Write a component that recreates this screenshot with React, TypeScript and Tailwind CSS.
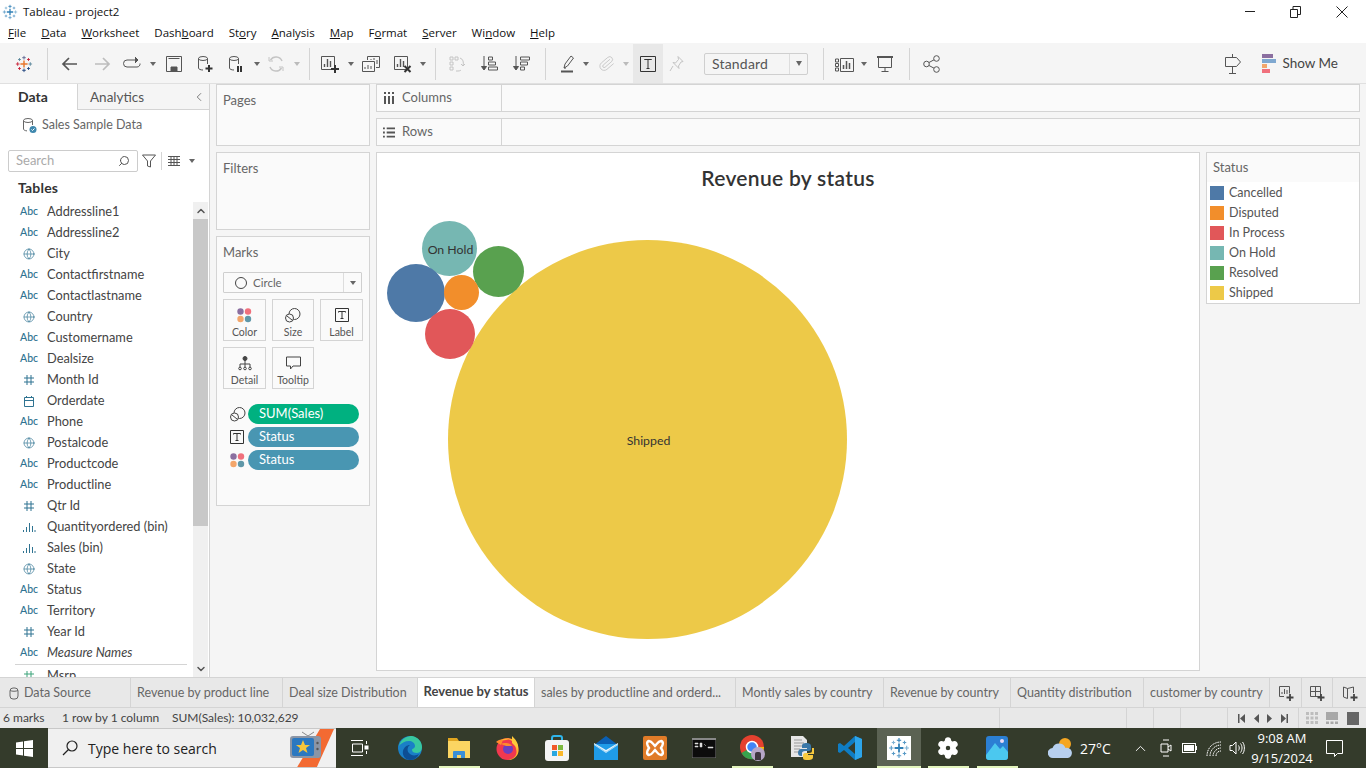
import type { ReactNode } from 'react'
import { Globe, Search, ChevronLeft, ChevronUp, ChevronDown, Settings, Paperclip } from 'lucide-react'

const fields: { icon: string; name: string; italic?: boolean }[] = [
  { icon: 'abc', name: 'Addressline1' },
  { icon: 'abc', name: 'Addressline2' },
  { icon: 'geo', name: 'City' },
  { icon: 'abc', name: 'Contactfirstname' },
  { icon: 'abc', name: 'Contactlastname' },
  { icon: 'geo', name: 'Country' },
  { icon: 'abc', name: 'Customername' },
  { icon: 'abc', name: 'Dealsize' },
  { icon: 'num', name: 'Month Id' },
  { icon: 'date', name: 'Orderdate' },
  { icon: 'abc', name: 'Phone' },
  { icon: 'geo', name: 'Postalcode' },
  { icon: 'abc', name: 'Productcode' },
  { icon: 'abc', name: 'Productline' },
  { icon: 'num', name: 'Qtr Id' },
  { icon: 'bin', name: 'Quantityordered (bin)' },
  { icon: 'bin', name: 'Sales (bin)' },
  { icon: 'geo', name: 'State' },
  { icon: 'abc', name: 'Status' },
  { icon: 'abc', name: 'Territory' },
  { icon: 'num', name: 'Year Id' },
  { icon: 'abc', name: 'Measure Names', italic: true },
]

const legend = [
  { name: 'Cancelled', color: '#4e79a7' },
  { name: 'Disputed', color: '#f28e2b' },
  { name: 'In Process', color: '#e15759' },
  { name: 'On Hold', color: '#76b7b2' },
  { name: 'Resolved', color: '#59a14f' },
  { name: 'Shipped', color: '#edc948' },
]

const menus: [string, string, string][] = [
  ['', 'F', 'ile'],
  ['', 'D', 'ata'],
  ['', 'W', 'orksheet'],
  ['Dash', 'b', 'oard'],
  ['St', 'o', 'ry'],
  ['', 'A', 'nalysis'],
  ['', 'M', 'ap'],
  ['F', 'o', 'rmat'],
  ['', 'S', 'erver'],
  ['Wi', 'n', 'dow'],
  ['', 'H', 'elp'],
]

function Cross({ x, y, s, c, w = 1 }: { x: number; y: number; s: number; c: string; w?: number }) {
  return <path d={`M${x - s} ${y}H${x + s}M${x} ${y - s}V${y + s}`} stroke={c} strokeWidth={w} fill="none" />
}

function TableauLogo({ size, colored }: { size: number; colored?: boolean }) {
  const a = colored ? '#e8762c' : '#2f7fb5'
  const b = colored ? '#5b6591' : '#2f7fb5'
  const c = colored ? '#c72037' : '#5a9bc7'
  const d = colored ? '#1f447e' : '#5a9bc7'
  const e = colored ? '#59879b' : '#7fb2d3'
  return (
    <svg width={size} height={size} viewBox="0 0 20 20">
      <Cross x={10} y={10} s={4} c={a} w={1.6} />
      <Cross x={10} y={3} s={2} c={b} />
      <Cross x={10} y={17} s={2} c={d} />
      <Cross x={3} y={10} s={2} c={c} />
      <Cross x={17} y={10} s={2} c={e} />
      <Cross x={5} y={5} s={1.6} c={e} />
      <Cross x={15} y={5} s={1.6} c={c} />
      <Cross x={5} y={15} s={1.6} c={c} />
      <Cross x={15} y={15} s={1.6} c={d} />
    </svg>
  )
}

function Ico({ children, w = 18, h = 18 }: { children: ReactNode; w?: number; h?: number }) {
  return (
    <svg width={w} height={h} viewBox={`0 0 ${w} ${h}`} fill="none" stroke="#555" strokeWidth="1">
      {children}
    </svg>
  )
}

function Caret({ light }: { light?: boolean }) {
  return <span className={`block w-0 h-0 border-x-[3px] border-x-transparent border-t-[4px] ${light ? 'border-t-[#bbbbbb]' : 'border-t-[#666666]'}`} />
}

function Sep({ className }: { className: string }) {
  return <div className={`w-px h-[32px] bg-[#d4d4d4] shrink-0 ${className}`} />
}

function Slot({ className, children }: { className: string; children: ReactNode }) {
  return <div className={`h-full flex items-center justify-center shrink-0 ${className}`}>{children}</div>
}

function DbIcon({ badge, stroke = '#555' }: { badge?: ReactNode; stroke?: string }) {
  return (
    <svg width="16" height="18" viewBox="0 0 16 18" fill="none" stroke={stroke} strokeWidth="1">
      <ellipse cx="6" cy="3.5" rx="4.5" ry="2" />
      <path d="M1.5 3.5V13c0 1.2 2 2 4.5 2M10.5 3.5V9" />
      {badge}
    </svg>
  )
}

function BarsBox({ badge }: { badge: ReactNode }) {
  return (
    <Ico w={20}>
      <path d="M1.5 1.5h13v11M14.5 14.5h-13v-13" />
      <path d="M4.5 12V9M7.5 12V4M10.5 12V6" strokeWidth="1.4" />
      {badge}
    </Ico>
  )
}

function Toolbar() {
  return (
    <div className="h-[41px] bg-[#f5f5f5] border-b border-[#e0e0e0] pt-px flex items-center shrink-0">
      <Slot className="w-[20px] ml-[14px]"><TableauLogo size={18} colored /></Slot>
      <Sep className="ml-[13px]" />
      <Slot className="w-[20px] ml-[12px]">
        <Ico><path d="M16 9H2M8 3 2 9l6 6" stroke="#555" strokeWidth="1.7" /></Ico>
      </Slot>
      <Slot className="w-[20px] ml-[12px]">
        <Ico><path d="M2 9h14M10 3l6 6-6 6" stroke="#bdbdbd" strokeWidth="1.7" /></Ico>
      </Slot>
      <Slot className="w-[20px] ml-[10px]">
        <Ico w={20}><path d="M13 5H5a3.5 3.5 0 0 0 0 7h10a3 3 0 0 0 3-3.5" /><path d="m13 2 3 3-3 3" fill="#555" /></Ico>
      </Slot>
      <Slot className="w-[7px] ml-[7px]"><Caret /></Slot>
      <Slot className="w-[20px] ml-[8px]">
        <Ico><path d="M1.5 1.5h15v15h-15zM3.5 3.5h11" /><path d="M6 16v-4h6v4" fill="#555" /></Ico>
      </Slot>
      <Slot className="w-[20px] ml-[11px]">
        <DbIcon badge={<path d="M12 10v7M8.5 13.5h7" stroke="#333" strokeWidth="2" />} />
      </Slot>
      <Slot className="w-[20px] ml-[11px]">
        <DbIcon badge={<path d="M10 11v6M13 11v6" stroke="#333" strokeWidth="2" />} />
      </Slot>
      <Slot className="w-[7px] ml-[7px]"><Caret /></Slot>
      <Slot className="w-[20px] ml-[6px]">
        <Ico><path d="M15 6a6.5 6.5 0 0 0-11.5-1M3 12a6.5 6.5 0 0 0 11.5 1" stroke="#c4c4c4" strokeWidth="1.5" /><path d="M2 2v4h4M16 16v-4h-4" stroke="#c4c4c4" /></Ico>
      </Slot>
      <Slot className="w-[7px] ml-[7px]"><Caret light /></Slot>
      <Sep className="ml-[9px]" />
      <Slot className="w-[20px] ml-[10px]">
        <BarsBox badge={<path d="M15 10v8M11 14h8" stroke="#333" strokeWidth="2" />} />
      </Slot>
      <Slot className="w-[7px] ml-[7px]"><Caret /></Slot>
      <Slot className="w-[20px] ml-[7px]">
        <Ico>
          <path d="M5.5 5V1.5h12v11H14" />
          <path d="M.5 6.5h12v10H.5z" fill="#f5f5f5" />
          <path d="M3 14v-2M6 14v-4M9 14v-3M9 5V4M12 5V3M15 9V5" />
        </Ico>
      </Slot>
      <Slot className="w-[20px] ml-[12px]">
        <BarsBox badge={<path d="m11.5 11 6 6M17.5 11l-6 6" stroke="#333" strokeWidth="2" />} />
      </Slot>
      <Slot className="w-[7px] ml-[6px]"><Caret /></Slot>
      <Sep className="ml-[9px]" />
      <Slot className="w-[20px] ml-[11px]">
        <Ico>
          <g stroke="#c4c4c4">
            <path d="M2 2h3v3H2zM7 2h3v3H7zM2 7h3v3H2zM2 12h3v3H2z" />
            <path d="M12 3c3 1 4 4 3 8M15 11l-2-2M15 11l2-2M8 16c3 0 4 0 5-1" />
          </g>
        </Ico>
      </Slot>
      <Slot className="w-[20px] ml-[12px]">
        <Ico>
          <path d="M4 1v13M1.5 11.5 4 15l2.5-3.500z" fill="#555" />
          <path d="M8.500 2h4v3h-4zM8.500 7h7v3h-7zM8.500 12h9v3h-9z" />
        </Ico>
      </Slot>
      <Slot className="w-[20px] ml-[12px]">
        <Ico>
          <path d="M4 1v13M1.500 11.500 4 15l2.500-3.500z" fill="#555" />
          <path d="M8.500 2h9v3h-9zM8.500 7h7v3h-7zM8.500 12h4v3h-4z" />
        </Ico>
      </Slot>
      <Sep className="ml-[14px]" />
      <Slot className="w-[20px] ml-[11px]">
        <Ico>
          <path d="m6 13 1-4 6-8 2.500 2-6 8z" fill="none" />
          <path d="M3 16.500h12" stroke="#555" strokeWidth="2" />
          <path d="M6 13h2" />
        </Ico>
      </Slot>
      <Slot className="w-[7px] ml-[5px]"><Caret /></Slot>
      <Slot className="w-[20px] ml-[7px]">
        <Paperclip size={17} strokeWidth={1.200} color="#c4c4c4" className="rotate-[5deg]" />
      </Slot>
      <Slot className="w-[7px] ml-[6px]"><Caret light /></Slot>
      <Slot className="w-[30px] ml-[4px] bg-[#e8e8e8]">
        <Ico><path d="M1.500 1.500h15v15h-15z" stroke="#333" /><path d="M5.500 5v-.5h7V5M9 4.500v9M7.500 13.500h3" stroke="#333" /></Ico>
      </Slot>
      <Slot className="w-[20px] ml-[4px]">
        <Ico><path d="M10 1.500l5 5-2 .5-2.500 4 .5 2.500-6-6 2.500.5 3-3.500zM5 11l-3 5" stroke="#c4c4c4" /></Ico>
      </Slot>
      <div className="ml-[17px] w-[104px] h-[22px] border border-[#cfcfcf] rounded-[2px] flex items-center shrink-0">
        <span className="flex-1 pl-[7px] pb-px text-[14px] text-[#555] tracking-[0.2px]">Standard</span>
        <span className="w-[18px] h-full border-l border-[#dddddd] flex items-center justify-center"><span className="w-0 h-0 border-x-[3.500px] border-x-transparent border-t-[5px] border-t-[#666666]" /></span>
      </div>
      <Sep className="ml-[15px]" />
      <Slot className="w-[20px] ml-[11px]">
        <Ico w={20}>
          <path d="M.5 4h3v3h-3zM.5 8.500h3v3h-3zM.5 13h3v3h-3z" />
          <path d="M5.500 3.500h13v13h-13z" />
          <path d="M8.500 14v-4M11.500 14V6M14.500 14V8" strokeWidth="1.500" />
        </Ico>
      </Slot>
      <Slot className="w-[7px] ml-[5px]"><Caret /></Slot>
      <Slot className="w-[20px] ml-[8px]">
        <Ico><path d="M1 2h16" strokeWidth="2" /><path d="M2.500 3v9.500h13V3M9 12.500v4M5.500 16.500h7" /></Ico>
      </Slot>
      <Sep className="ml-[14px]" />
      <Slot className="w-[20px] ml-[12px]">
        <Ico>
          <circle cx="3.500" cy="9" r="2.800" />
          <circle cx="13.500" cy="3.500" r="2.800" />
          <circle cx="13.500" cy="14.500" r="2.800" />
          <path d="m6 7.500 5-2.700M6 10.500l5 2.700" />
        </Ico>
      </Slot>
      <Slot className="w-[20px] ml-auto">
        <Ico w={20} h={22}>
          <path d="M9.500 1v3M9.500 14v6M6 20.500h7M2.500 4.500h11l4 4.500-4 4.500h-11z" />
        </Ico>
      </Slot>
      <div className="ml-[19px] w-[14px] flex flex-col gap-0 shrink-0">
        <span className="h-[4px] w-[11px] bg-[#8b6fa0]" />
        <span className="h-[4px] w-[14px] bg-[#7fa8d0] mt-px" />
        <span className="h-[4px] w-[5px] bg-[#f3a66b] mt-px" />
        <span className="h-[4px] w-[8px] bg-[#f0707c] mt-px" />
      </div>
      <span className="ml-[6px] mr-[28px] text-[13.500px] text-[#444] whitespace-nowrap">Show Me</span>
    </div>
  )
}

function FieldIcon({ kind }: { kind: string }) {
  if (kind === 'abc') return <span className="text-[10.500px] font-medium text-[#2f7391] tracking-[-0.1px]">Abc</span>
  if (kind === 'geo') return <Globe size={12} strokeWidth={1.300} color="#2f7391" />
  if (kind === 'num') {
    return (
      <svg width="12" height="12" viewBox="0 0 12 12" fill="none" stroke="#2f7391">
        <path d="M4 1v10M8 1v10M1 4h10M1 8h10" />
      </svg>
    )
  }
  if (kind === 'date') {
    return (
      <svg width="12" height="12" viewBox="0 0 12 12" fill="none" stroke="#2f7391">
        <path d="M1.500 2.500h9v9h-9zM1.500 5.500h9M3.500 1v2M8.500 1v2" />
      </svg>
    )
  }
  return (
    <svg width="14" height="12" viewBox="0 0 14 12" fill="none" stroke="#2f7391">
      <path d="M1.500 11V9M4.500 11V6M7.500 11V2M10.500 11V5M13 11V9" />
    </svg>
  )
}

function DataPane() {
  return (
    <div className="w-[210px] shrink-0 bg-white border-r border-[#d4d4d4] flex flex-col">
      <div className="h-[26px] flex shrink-0">
        <div className="w-[77px] pl-[18px] pb-px flex items-center text-[14px] font-bold text-[#333]">Data</div>
        <div className="flex-1 pl-[12px] pt-px flex items-center justify-between bg-[#f5f5f5] border-l border-b border-[#d4d4d4] text-[13.500px] text-[#555]">
          Analytics
          <ChevronLeft size={14} strokeWidth={1.300} className="mr-[3px]" color="#555" />
        </div>
      </div>
      <div className="h-[31px] flex items-center pl-[22px] shrink-0 text-[12.500px] text-[#666]">
        <svg width="16" height="17" viewBox="0 0 16 17" fill="none" stroke="#666">
          <ellipse cx="6" cy="3.500" rx="4.500" ry="2" />
          <path d="M1.500 3.500V12c0 1 1.500 1.700 3.500 1.900M10.500 3.500V8" />
          <circle cx="11" cy="12.500" r="3.500" fill="#3f88ae" stroke="none" />
          <path d="m9.500 12.500 1 1 2-2" stroke="#fff" />
        </svg>
        <span className="ml-[4px]">Sales Sample Data</span>
      </div>
      <div className="h-[35px] flex items-center shrink-0 pl-[8px] pt-[5px]">
        <div className="w-[130px] h-[22px] border border-[#cccccc] rounded-[2px] flex items-center justify-between px-[7px] text-[13px] text-[#aaaaaa]">
          Search
          <Search size={12} color="#555" className="-scale-x-100" />
        </div>
        <svg width="14" height="14" viewBox="0 0 14 14" fill="none" stroke="#555" className="ml-[4px]">
          <path d="M.5 1h13L8.500 7v6l-3-1V7z" />
        </svg>
        <span className="ml-[5px] w-px h-[18px] bg-[#d4d4d4]" />
        <svg width="12" height="10" viewBox="0 0 12 10" fill="none" stroke="#555" className="ml-[6px]">
          <path d="M0 .5h12M0 3.500h12M0 6.500h12M0 9.500h12M3 0v10M6 0v10M9 0v10" />
        </svg>
        <span className="ml-[9px] flex items-center"><Caret /></span>
      </div>
      <div className="h-[24px] pl-[18px] pb-[2px] flex items-center shrink-0 text-[14px] font-bold text-[#333] tracking-[0.2px]">Tables</div>
      <div className="flex-1 flex min-h-0">
        <div className="flex-1 overflow-hidden pt-px">
          {fields.map((f) => (
            <div key={f.name} className="h-[21px] flex items-center">
              <span className="w-[47px] pl-[19px] pr-[8px] flex justify-center shrink-0"><FieldIcon kind={f.icon} /></span>
              <span className={`text-[12.800px] text-[#444] whitespace-nowrap ${f.italic ? 'italic' : ''}`}>{f.name}</span>
            </div>
          ))}
          <div className="h-px bg-[#d4d4d4] ml-[15px] mr-[6px] mt-[1px]" />
          <div className="h-[21px] flex items-center">
            <span className="w-[47px] pl-[19px] pr-[8px] flex justify-center shrink-0">
              <svg width="12" height="12" viewBox="0 0 12 12" fill="none" stroke="#3da37a"><path d="M4 1v10M8 1v10M1 4h10M1 8h10" /></svg>
            </span>
            <span className="text-[12.800px] text-[#444]">Msrp</span>
          </div>
        </div>
        <div className="w-[15px] mr-px shrink-0 bg-[#f0f0f0] flex flex-col mt-[2px]">
          <div className="h-[17px] flex items-center justify-center"><ChevronUp size={12} strokeWidth={3} color="#555" /></div>
          <div className="h-[307px] bg-[#c8c8c8]" />
          <div className="flex-1" />
          <div className="h-[17px] flex items-center justify-center"><ChevronDown size={12} strokeWidth={3} color="#555" /></div>
        </div>
      </div>
    </div>
  )
}

function MarkBtn({ label, children }: { label: string; children: ReactNode }) {
  return (
    <div className="h-[42px] border border-[#d4d4d4] bg-[#fafafa] flex flex-col items-center pt-[6px]">
      <span className="h-[18px] flex items-center">{children}</span>
      <span className="text-[10.500px] text-[#555] mt-[3px] leading-none">{label}</span>
    </div>
  )
}

function ColorDots() {
  return (
    <svg width="15" height="15" viewBox="0 0 15 15">
      <circle cx="3.500" cy="3.500" r="3.200" fill="#8b6fa0" />
      <circle cx="11" cy="3.500" r="3.200" fill="#f0707c" />
      <circle cx="3.500" cy="11" r="3.200" fill="#f3a66b" />
      <circle cx="11" cy="11" r="3.200" fill="#5f97a8" />
    </svg>
  )
}

function SizeIcon() {
  return (
    <svg width="16" height="15" viewBox="0 0 16 15" fill="none" stroke="#444">
      <circle cx="9.500" cy="6" r="5.500" />
      <circle cx="4.500" cy="10" r="4" fill="#fafafa" />
      <path d="m2 8 5 4" />
    </svg>
  )
}

function LabelIcon() {
  return (
    <svg width="14" height="14" viewBox="0 0 14 14" fill="none" stroke="#333">
      <path d="M.5.5h13v13H.5z" />
      <path d="M3.500 4.500v-1h7v1M7 3.500v7M5.500 10.500h3" />
    </svg>
  )
}

function Pill({ bg, label, children }: { bg: string; label: string; children: ReactNode }) {
  return (
    <div className="flex items-center h-[20px]">
      <span className="w-[31px] pl-[13px] flex items-center">{children}</span>
      <div className={`w-[111px] h-[20px] rounded-full pl-[11px] flex items-center text-[13px] text-white ${bg}`}>{label}</div>
    </div>
  )
}

function CardsColumn() {
  return (
    <div className="w-[154px] ml-[6px] shrink-0 flex flex-col gap-[6px]">
      <div className="h-[62px] bg-[#fafafa] border border-[#d4d4d4] px-[6px] pt-[6px] text-[13px] text-[#666]">Pages</div>
      <div className="h-[78px] bg-[#fafafa] border border-[#d4d4d4] px-[6px] pt-[6px] text-[13px] text-[#666]">Filters</div>
      <div className="h-[270px] bg-[#fafafa] border border-[#d4d4d4] px-[6px] pt-[6px] text-[#666]">
        <div className="text-[13px] h-[18px] leading-[18px]">Marks</div>
        <div className="mt-[11px] h-[21px] w-[139px] border border-[#cfcfcf] rounded-[1px] flex items-center">
          <span className="w-[23px] flex justify-end">
            <span className="w-[12px] h-[12px] rounded-full border border-[#444]" />
          </span>
          <span className="ml-[6px] flex-1 text-[11.500px] text-[#666]">Circle</span>
          <span className="w-[18px] h-full border-l border-[#dddddd] flex items-center justify-center"><span className="w-0 h-0 border-x-[3.500px] border-x-transparent border-t-[4px] border-t-[#666666]" /></span>
        </div>
        <div className="mt-[6px] grid grid-cols-[43px_42px_43px] gap-x-[6px] gap-y-[6px] w-[140px]">
          <MarkBtn label="Color"><ColorDots /></MarkBtn>
          <MarkBtn label="Size"><SizeIcon /></MarkBtn>
          <MarkBtn label="Label"><LabelIcon /></MarkBtn>
          <MarkBtn label="Detail">
            <svg width="14" height="15" viewBox="0 0 14 15" fill="none" stroke="#444">
              <circle cx="7" cy="2.500" r="2" fill="#444" />
              <path d="M7 4v4M2 11V8h10v3M7 8v3" />
              <circle cx="2" cy="12.500" r="1.300" />
              <circle cx="7" cy="12.500" r="1.300" />
              <circle cx="12" cy="12.500" r="1.300" />
            </svg>
          </MarkBtn>
          <MarkBtn label="Tooltip">
            <svg width="15" height="14" viewBox="0 0 15 14" fill="none" stroke="#444">
              <path d="M.5 1h14v9H7l-2.500 3v-3h-4z" />
            </svg>
          </MarkBtn>
        </div>
        <div className="mt-[15px] flex flex-col gap-[3px] -ml-[6px]">
          <Pill bg="bg-[#00b180]" label="SUM(Sales)"><SizeIcon /></Pill>
          <Pill bg="bg-[#4996b2]" label="Status"><LabelIcon /></Pill>
          <Pill bg="bg-[#4996b2]" label="Status"><ColorDots /></Pill>
        </div>
      </div>
    </div>
  )
}

function Shelf({ label, children }: { label: string; children: ReactNode }) {
  return (
    <div className="h-[28px] bg-[#fafafa] border border-[#d4d4d4] flex items-center text-[13px] text-[#666]">
      <div className="w-[125px] h-full border-r border-[#d4d4d4] flex items-center pl-[6px] gap-[7px]">
        {children}
        {label}
      </div>
    </div>
  )
}

function Circle({ cls, label }: { cls: string; label?: string }) {
  return (
    <div className={`absolute rounded-full flex items-center justify-center pt-[3px] pl-[2px] text-[12.300px] text-[#333] ${cls}`}>
      {label}
    </div>
  )
}

function Viz() {
  return (
    <div className="flex-1 flex flex-col ml-[6px] mr-[6px] gap-[6px] min-w-0">
      <Shelf label="Columns">
        <svg width="12" height="12" viewBox="0 0 12 12" fill="#555"><path d="M1 4h2v8H1zM5 4h2v8H5zM9 4h2v8H9zM1 0h2v2H1zM5 0h2v2H5zM9 0h2v2H9z" /></svg>
      </Shelf>
      <Shelf label="Rows">
        <svg width="12" height="11" viewBox="0 0 13 11" fill="#555"><path d="M0 0h2v2H0zM0 4.500h2v2H0zM0 9h2v2H0zM4 0h9v2H4zM4 4.500h9v2H4zM4 9h9v2H4z" /></svg>
      </Shelf>
      <div className="flex-1 flex gap-[6px] min-h-0 mb-[6px]">
        <div className="w-[824px] bg-white border border-[#d4d4d4] relative overflow-hidden">
          <div className="text-center text-[21px] font-semibold text-[#333] tracking-[0.3px] pt-[12px] leading-[26px]">Revenue by status</div>
          <Circle cls="left-[71px] top-[87px] w-[399px] h-[399px] bg-[#edc948]" label="Shipped" />
          <Circle cls="left-[45px] top-[68px] w-[55px] h-[55px] bg-[#76b7b2]" label="On Hold" />
          <Circle cls="left-[96px] top-[93px] w-[51px] h-[51px] bg-[#59a14f]" />
          <Circle cls="left-[10px] top-[111px] w-[58px] h-[58px] bg-[#4e79a7]" />
          <Circle cls="left-[67px] top-[122px] w-[35px] h-[35px] bg-[#f28e2b]" />
          <Circle cls="left-[48px] top-[156px] w-[50px] h-[50px] bg-[#e15759]" />
        </div>
        <div className="flex-1 h-[152px] bg-white border border-[#d4d4d4]">
          <div className="h-[29px] bg-[#fafafa] pl-[6px] flex items-center text-[13px] text-[#666]">Status</div>
          <div className="pt-[1px]">
            {legend.map((l) => (
              <div key={l.name} className="h-[20px] flex items-center pl-[3px]">
                <span className="w-[14px] h-[14px]" style={{ backgroundColor: l.color }} />
                <span className="ml-[5px] text-[12.500px] text-[#555]">{l.name}</span>
              </div>
            ))}
          </div>
        </div>
      </div>
    </div>
  )
}

function Tab({ w, active, children }: { w: string; active?: boolean; children: ReactNode }) {
  return (
    <div className={`h-full shrink-0 border-r border-[#d4d4d4] flex items-center overflow-hidden whitespace-nowrap ${w} ${active ? 'bg-white font-bold text-[13px] text-[#444] pb-[2px] justify-center' : 'text-[12.500px] text-[#666] pl-[6px] pt-px'}`}>
      {children}
    </div>
  )
}

function BarsBoxSmall() {
  return (
    <Ico w={16} h={16}>
      <path d="M1.500 1.500h10v7M6 11.500H1.500v-10" />
      <path d="M4 9V7M6.500 9V4M9 9V5" />
      <path d="M12 9v7M8.500 12.500h7" stroke="#444" strokeWidth="1.800" />
    </Ico>
  )
}

function TabBar() {
  return (
    <div className="h-[31px] shrink-0 bg-[#e8e8e8] border-y border-[#d4d4d4] flex">
      <Tab w="w-[131px]">
        <svg width="10" height="13" viewBox="0 0 10 13" fill="none" stroke="#666" className="ml-[3px] mr-[5px]">
          <rect x="1" y="1" width="8" height="11" rx="3" />
          <path d="M1 3.500c2 1 6 1 8 0" />
        </svg>
        Data Source
      </Tab>
      <Tab w="w-[152px]">Revenue by product line</Tab>
      <Tab w="w-[135px]">Deal size Distribution</Tab>
      <Tab w="w-[117px]" active>Revenue by status</Tab>
      <Tab w="w-[201px]">sales by productline and orderd...</Tab>
      <Tab w="w-[148px]">Montly sales by country</Tab>
      <Tab w="w-[127px]">Revenue by country</Tab>
      <Tab w="w-[133px]">Quantity distribution</Tab>
      <Tab w="w-[126px]">customer by country</Tab>
      <div className="w-[32px] h-full border-r border-[#d4d4d4] flex items-center justify-center shrink-0">
        <BarsBoxSmall />
      </div>
      <div className="w-[31px] h-full border-r border-[#d4d4d4] flex items-center justify-center shrink-0">
        <Ico w={16} h={16}>
          <path d="M1.500 1.500h10v10h-10zM6.500 1.500v10M1.500 6.500h10" />
          <path d="M12 9v7M8.500 12.500h7" stroke="#444" strokeWidth="1.800" />
        </Ico>
      </div>
      <div className="flex-1 flex items-center justify-center">
        <Ico w={16} h={16}>
          <path d="M1.500 2v10l4 1.500V3.500zM5.500 3.500l6-1.500v6" />
          <path d="M12 9v7M8.500 12.500h7" stroke="#444" strokeWidth="1.800" />
        </Ico>
      </div>
    </div>
  )
}

function StatusBar() {
  return (
    <div className="h-[20px] shrink-0 bg-[#e8e8e8] flex items-center text-[12px] text-[#444]">
      <span className="w-[59px] pl-[3px] shrink-0">6 marks</span>
      <span className="ml-[3px] w-[110px] shrink-0">1 row by 1 column</span>
      <span className="whitespace-nowrap">SUM(Sales): 10,032,629</span>
      <div className="ml-auto flex h-full items-center">
        <span className="h-full w-[127px] border-l border-[#d4d4d4]" />
        <span className="h-full w-[27px] border-l border-[#d4d4d4]" />
        <span className="h-full w-[27px] border-l border-[#d4d4d4]" />
        <span className="h-full w-[47px] border-l border-[#d4d4d4]" />
        <div className="h-full w-[71px] border-l border-[#d4d4d4] flex items-center justify-around px-[6px]">
          <svg width="7" height="9" viewBox="0 0 7 9" fill="#555"><path d="M0 0h1.500v9H0zM7 0v9L2 4.500z" /></svg>
          <svg width="5" height="9" viewBox="0 0 5 9" fill="#555"><path d="M5 0v9L0 4.500z" /></svg>
          <svg width="5" height="9" viewBox="0 0 5 9" fill="#555"><path d="M0 0v9l5-4.500z" /></svg>
          <svg width="7" height="9" viewBox="0 0 7 9" fill="#555"><path d="M5.500 0H7v9H5.500zM0 0v9l5-4.500z" /></svg>
        </div>
        <div className="h-full w-[68px] border-l border-[#d4d4d4] flex items-center justify-around px-[3px]">
          <svg width="12" height="12" viewBox="0 0 12 12" fill="#bdbdbd"><path d="M0 0h3v3H0zM4.500 0h3v3h-3zM9 0h3v3H9zM0 4.500h3v3H0zM4.500 4.500h3v3h-3zM9 4.500h3v3H9zM0 9h3v3H0zM4.500 9h3v3h-3zM9 9h3v3H9z" /></svg>
          <svg width="12" height="12" viewBox="0 0 12 12" fill="#a8a8a8"><path d="M0 0h12v8H0zM0 9.500h3V12H0zM4.500 9.500h3V12h-3zM9 9.500h3V12H9z" /></svg>
          <span className="w-[12px] h-[13px] bg-[#666]" />
        </div>
      </div>
    </div>
  )
}

function TaskItem({ children, open, active }: { children: ReactNode; open?: boolean; active?: boolean }) {
  return (
    <div className="w-[48.900px] h-full relative flex items-center justify-center shrink-0">
      {active && <span className="absolute inset-y-0 left-[2px] right-[3px] bg-[#5b6253]" />}
      <span className="relative flex">{children}</span>
      {open && <span className={`absolute bottom-0 h-[2px] bg-[#e3f5bd] ${active ? 'left-[2px] right-[3px]' : 'left-[4px] right-[4px]'}`} />}
    </div>
  )
}

function Taskbar() {
  return (
    <div className="h-[40px] shrink-0 bg-[#343b2b] flex items-stretch font-['Open_Sans',sans-serif] text-white">
      <div className="w-[48px] flex items-center justify-center shrink-0">
        <svg width="17" height="17" viewBox="0 0 17 17" fill="#fff"><path d="M0 2.500 7 1.500v6.500H0zM8 1.300 17 0v8H8zM0 9h7v6.500l-7-1zM8 9h9v8l-9-1.300z" /></svg>
      </div>
      <div className="w-[288px] bg-[#f0f0f0] border-t border-b border-[#c8c8c8] flex items-center relative overflow-hidden shrink-0">
        <svg width="16" height="16" viewBox="0 0 16 16" fill="none" stroke="#222" className="ml-[14px]" strokeWidth="1.200">
          <circle cx="10" cy="6" r="5" />
          <path d="M6.500 9.500 1 15" />
        </svg>
        <span className="ml-[10px] text-[14px] text-[#222] whitespace-nowrap">Type here to search</span>
        <svg width="60" height="40" viewBox="0 0 60 40" className="absolute right-0 top-0">
          <path d="M44 0h14L40 40H20z" fill="#f36a32" />
          <path d="M26 3l6 4M38 3l-6 4" stroke="#888" />
          <rect x="14" y="7" width="31" height="22" rx="3" fill="#8b95a5" />
          <rect x="16" y="9" width="22" height="18" rx="2" fill="#2b78c0" />
          <path d="m27 11 2 5h5l-4 3 1.500 5-4.500-3-4.500 3 1.500-5-4-3h5z" fill="#f6c63a" />
          <circle cx="41.500" cy="14" r="1.200" fill="#555" />
          <circle cx="41.500" cy="20" r="1.200" fill="#555" />
        </svg>
      </div>
      <div className="w-[48px] flex items-center justify-center shrink-0 mr-[2px]">
        <svg width="18" height="16" viewBox="0 0 18 16" fill="none" stroke="#fff">
          <path d="M0 .5h12M0 15.500h12M1.500 4h10v8h-10zM15.500 1v3M15.500 11v3" />
          <rect x="14" y="6" width="3" height="3" fill="#fff" />
        </svg>
      </div>
      <TaskItem>
        <svg width="24" height="24" viewBox="0 0 24 24">
          <circle cx="12" cy="12" r="12" fill="#1a7fc7" />
          <path d="M1 10C3 2 10 0 14 0c6 1 10 6 10 11 0 3-2 6-5 6-3 0-5-1-5-3 0-2 3-1 3-4 0-3-3-5-6-5-4 0-8 2-10 5z" fill="#38c7a0" />
          <path d="M12 24C7 24 4 19 5 15c1-4 4-6 7-6-3 2-3 6-1 8 2 3 7 3 10 1-2 4-5 6-9 6z" fill="#0d4e94" />
        </svg>
      </TaskItem>
      <TaskItem open>
        <svg width="24" height="22" viewBox="0 0 24 22">
          <path d="M1 1h9l2 3H1z" fill="#e0a520" />
          <rect x="1" y="4" width="22" height="17" fill="#fbd562" />
          <path d="M6 21v-6a1 1 0 0 1 1-1h10a1 1 0 0 1 1 1v6h-4v-3h-4v3z" fill="#3a8fd6" />
        </svg>
      </TaskItem>
      <TaskItem>
        <svg width="24" height="24" viewBox="0 0 24 24">
          <circle cx="11.500" cy="13" r="11" fill="#f1384f" />
          <path d="M3 5c5-3 15-6 19 6 2 6-2 13-10 13 6-1 10-5 8-11C19 6 14 2 10 4z" fill="#ffb52e" />
          <path d="M16 0c3 3 7 7 6 13l-6-6z" fill="#ffca3a" />
          <path d="M0 6c2-2 5-3 7-2l-2 5z" fill="#ff8a2d" />
          <circle cx="12" cy="13" r="5" fill="#6c3fc0" />
          <path d="M5 8c3-2 10-1 11 2l-6 0z" fill="#ff8a2d" />
        </svg>
      </TaskItem>
      <TaskItem>
        <svg width="24" height="26" viewBox="0 0 24 26">
          <path d="M7 7V3a2 2 0 0 1 2-2h6a2 2 0 0 1 2 2v4" fill="none" stroke="#2fb5ea" strokeWidth="2" />
          <rect y="5" width="24" height="21" rx="3" fill="#f4f4f4" />
          <path d="M7 10h5v5H7z" fill="#f15a29" />
          <path d="M13 10h5v5h-5z" fill="#7db93f" />
          <path d="M7 16h5v5H7z" fill="#2aa8e0" />
          <path d="M13 16h5v5h-5z" fill="#fbb82b" />
        </svg>
      </TaskItem>
      <TaskItem>
        <svg width="24" height="24" viewBox="0 0 24 24">
          <path d="M0 9 12 0l12 9v15H0z" fill="#0a5fb4" />
          <path d="M0 8h24v16H0z" fill="#1f9be8" />
          <path d="M0 8l12 8 12-8v-1L12 14 0 7z" fill="#e6f3fb" />
          <path d="M0 8 12 16 24 8v1L12 17 0 9z" fill="#bfe3f7" />
        </svg>
      </TaskItem>
      <TaskItem>
        <svg width="24" height="24" viewBox="0 0 24 24">
          <rect width="24" height="24" rx="2" fill="#e07b28" />
          <path d="M6 5c3 0 4 3 6 5 2-2 3-5 6-5 3 1 2 4 0 7 2 3 3 6 0 7-3 0-4-3-6-5-2 2-3 5-6 5-3-1-2-4 0-7-2-3-3-6 0-7z" fill="none" stroke="#fff" strokeWidth="2.400" />
        </svg>
      </TaskItem>
      <TaskItem>
        <svg width="24" height="20" viewBox="0 0 24 20">
          <rect width="24" height="20" fill="#0c0c0c" stroke="#777" />
          <path d="M0 0h24v2H0z" fill="#888" />
          <path d="M3 5h3v1H3zM3 8h3v1H3zM8 5h2v4H8zM12 6l2 2M16 9h5v1h-5z" stroke="#ddd" fill="#ddd" strokeWidth=".5" />
        </svg>
      </TaskItem>
      <TaskItem open>
        <svg width="26" height="26" viewBox="0 0 26 26">
          <circle cx="12" cy="12" r="12" fill="#e5412f" />
          <path d="M12 12 1.500 18A12 12 0 0 0 14 24z" fill="#37a24d" />
          <path d="M12 12h12a12 12 0 0 1-10 12z" fill="#fbbc05" />
          <circle cx="12" cy="12" r="5.500" fill="#4285f4" stroke="#fff" strokeWidth="1.500" />
          <circle cx="18" cy="19" r="7" fill="#b5a6c7" />
          <path d="M15 25v-6a2 2 0 0 1 2-2h2a2 2 0 0 1 2 2v6z" fill="#3e3640" />
        </svg>
      </TaskItem>
      <TaskItem>
        <svg width="24" height="26" viewBox="0 0 24 26">
          <path d="M1 1h12l4 4v17H1z" fill="#e6e6e6" />
          <path d="M4 5h8M4 8h10M4 11h10M4 14h6M4 17h6" stroke="#999" />
          <path d="M16 9c-4 0-5 1-5 3v2h5v1h-6c-2 0-3 2-3 4s1 3 3 3h1v-3c0-1 1-2 3-2h4c1 0 2-1 2-2v-3c0-2-2-3-4-3z" fill="#3a78a8" transform="translate(1 -1)" />
          <path d="M18 25c4 0 5-1 5-3v-2h-5v-1h6v-6h-2v3c0 1-1 2-3 2h-4c-1 0-2 1-2 2v3c0 2 2 2 5 2z" fill="#f7c93e" />
        </svg>
      </TaskItem>
      <TaskItem>
        <svg width="24" height="24" viewBox="0 0 24 24">
          <path d="M17 0 24 3v18l-7 3L6 14l-4 3-2-1v-8l2-1 4 3z" fill="#0f7dc4" />
          <path d="M17 0 24 3v18l-7 3z" fill="#2da5ea" />
          <path d="M17 6v12l-7-6z" fill="#343b2b" />
        </svg>
      </TaskItem>
      <TaskItem open active>
        <span className="w-[24px] h-[24px] bg-white flex items-center justify-center"><TableauLogo size={22} /></span>
      </TaskItem>
      <TaskItem open>
        <Settings size={24} color="#fff" fill="#fff" strokeWidth={1.500} className="[&>circle]:fill-[#343b2b]" />
      </TaskItem>
      <TaskItem open>
        <svg width="22" height="24" viewBox="0 0 22 24">
          <rect width="22" height="24" rx="3" fill="#2b7fd4" />
          <path d="M0 19 9 7l5 6 3-3 5 6v5a3 3 0 0 1-3 3H3a3 3 0 0 1-3-3z" fill="#4bc8ef" />
          <circle cx="16" cy="5" r="2" fill="#e9d8f5" />
        </svg>
      </TaskItem>
      <div className="ml-auto flex items-center w-[318px] shrink-0 h-full">
        <svg width="25" height="24" viewBox="0 0 25 24">
          <circle cx="17" cy="8" r="6" fill="#f5a623" />
          <path d="M5 22a5 5 0 0 1-.5-10 7 7 0 0 1 13 0 5 5 0 0 1 2.500 10z" fill="#b7d0ef" />
        </svg>
        <span className="ml-[7px] text-[14px] w-[38px]">27°C</span>
        <ChevronUp size={17} strokeWidth={1.300} className="ml-[14px]" />
        <svg width="12" height="18" viewBox="0 0 12 18" fill="none" stroke="#fff" className="ml-[11px]">
          <path d="M3 1h6M3 17h6M1 5h7v8H1zM8 8l3-2v6l-3-2" />
        </svg>
        <svg width="15" height="10" viewBox="0 0 15 10" fill="none" stroke="#fff" className="ml-[10px]">
          <rect x=".5" y=".5" width="13" height="9" />
          <rect x="2" y="2" width="10" height="6" fill="#fff" stroke="none" />
          <path d="M14.500 3v4" />
        </svg>
        <svg width="16" height="15" viewBox="0 0 16 15" fill="none" stroke="#fff" className="ml-[9px]" strokeDasharray="1.500 .8">
          <path d="M1 15C1 7 7 1 15 1M4 15c0-6 5-11 11-11M7 15c0-4 4-8 8-8M10 15c0-3 2-5 5-5" />
        </svg>
        <svg width="16" height="16" viewBox="0 0 16 16" fill="none" stroke="#fff" className="ml-[7px]">
          <path d="M1 5.500h2.500L7 2v12l-3.500-3.500H1zM9.500 5.500c1 1.500 1 3.500 0 5M11.500 3.500c2 2.500 2 6.500 0 9M13.500 2c2.500 3 2.500 9 0 12" />
        </svg>
        <div className="ml-[9px] w-[56px] flex flex-col items-center text-[13px] leading-[20px] shrink-0 whitespace-nowrap">
          <span>9:08 AM</span>
          <span>9/15/2024</span>
        </div>
        <svg width="17" height="17" viewBox="0 0 17 17" fill="none" stroke="#fff" className="ml-[16px]">
          <path d="M.5.500h16v13h-5l-3 3v-3h-8z" />
        </svg>
      </div>
    </div>
  )
}

export default function App() {
  return (
    <div className="w-[1366px] h-[768px] flex flex-col overflow-hidden bg-white font-['Lato',sans-serif]">
      <div className="h-[22px] shrink-0 flex items-center pt-px font-['Open_Sans',sans-serif] text-[11.500px] text-[#111]">
        <span className="ml-[2px] w-[16px] flex"><TableauLogo size={16} /></span>
        <span className="ml-[5px]">Tableau - project2</span>
        <div className="ml-auto flex items-center">
          <span className="w-[10px] h-px bg-[#222] mr-[35px]" />
          <svg width="11" height="12" viewBox="0 0 11 12" fill="none" stroke="#222" className="mr-[35px]">
            <path d="M.5 3.500h7v8h-7zM3 3.500V.5h7.500v8h-3" />
          </svg>
          <svg width="12" height="12" viewBox="0 0 12 12" fill="none" stroke="#222" className="mr-[18px]">
            <path d="m.5.5 11 11M11.500.5l-11 11" />
          </svg>
        </div>
      </div>
      <div className="h-[21px] shrink-0 flex items-center pl-[8px] pt-px gap-[15px] font-['Open_Sans',sans-serif] text-[11.500px] text-[#111]">
        {menus.map(([a, b, c]) => (
          <span key={a + b + c}>{a}<u>{b}</u>{c}</span>
        ))}
      </div>
      <Toolbar />
      <div className="flex-1 min-h-0 flex bg-[#f5f5f5]">
        <DataPane />
        <CardsColumn />
        <Viz />
      </div>
      <TabBar />
      <StatusBar />
      <Taskbar />
    </div>
  )
}
